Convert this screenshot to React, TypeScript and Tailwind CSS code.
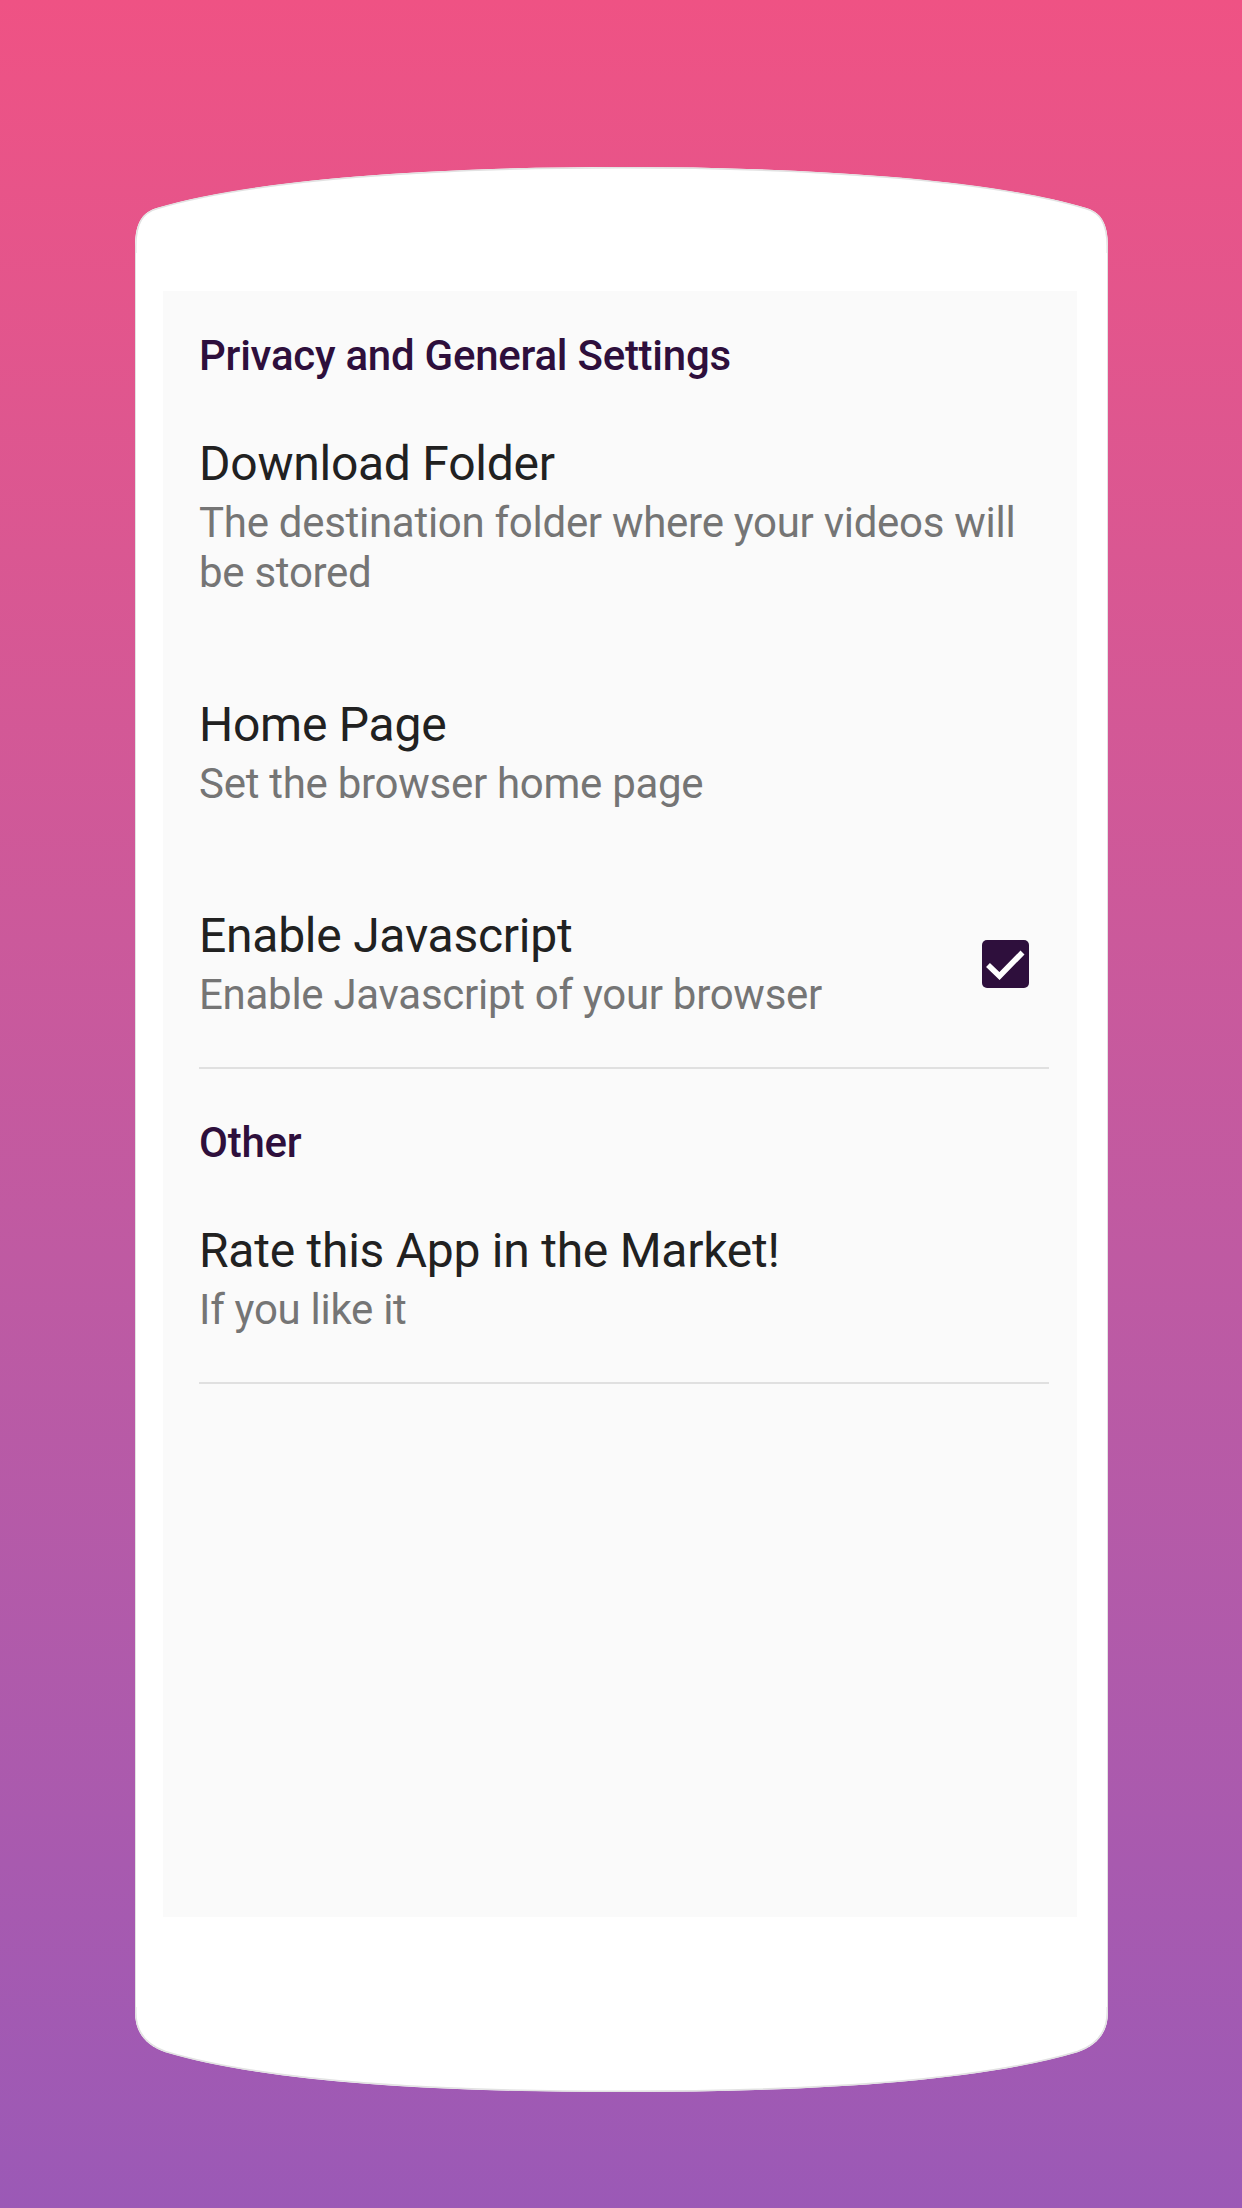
import React from "react";

function TopCap() {
  return (
    <svg width="973" height="86" viewBox="0 0 973 86" className="block">
      <path
        d="M0,86 L0,80 C0,55 8,45 22,41 C120,12 300,0 486.5,0 C673,0 853,12 951,41 C965,45 973,55 973,80 L973,86 Z"
        fill="#ffffff"
      />
      <path
        d="M0.75,86 L0.75,80 C0.75,55 8.5,45.5 22.5,41.5 C120,12.6 300,0.75 486.5,0.75 C673,0.75 853,12.6 950.5,41.5 C964.5,45.5 972.25,55 972.25,80 L972.25,86"
        fill="none"
        stroke="#e2e2e2"
        strokeWidth="1.5"
      />
    </svg>
  );
}

function BottomCap() {
  return (
    <svg width="973" height="86" viewBox="0 0 973 86" className="block">
      <path
        d="M0,0 L0,5 C0,25 10,38 30,45 C130,75 300,85 486.5,85 C673,85 843,75 943,45 C963,38 973,25 973,5 L973,0 Z"
        fill="#ffffff"
      />
      <path
        d="M0.75,0 L0.75,5 C0.75,25 10.5,37.5 30.5,44.5 C130,74.3 300,84.25 486.5,84.25 C673,84.25 843,74.3 942.5,44.5 C962.5,37.5 972.25,25 972.25,5 L972.25,0"
        fill="none"
        stroke="#e2e2e2"
        strokeWidth="1.5"
      />
    </svg>
  );
}

function Header({ children, first }: { children: React.ReactNode; first?: boolean }) {
  return (
    <div
      className={`${first ? "pt-[40px]" : "pt-[49px]"} pb-[3px] text-[42px] leading-[50px] font-medium tracking-[-0.25px] text-[#2e0f3c]`}
    >
      {children}
    </div>
  );
}

function Item({
  title,
  summary,
  checked,
}: {
  title: string;
  summary: string;
  checked?: boolean;
}) {
  return (
    <div className="flex items-center pt-[52px] pb-[47px]">
      <div className="flex-1 min-w-0 pr-[2px]">
        <div className="text-[48px] leading-[56px] tracking-[-0.25px] text-[#212121]">{title}</div>
        <div className="mt-[6px] text-[42px] leading-[50px] tracking-[-0.28px] text-[#757575]">
          {summary}
        </div>
      </div>
      {checked && (
        <div className="ml-[20px] mr-[20px] flex h-[48px] w-[47px] items-center justify-center rounded-[5px] bg-[#2e0f3c]">
          <svg width="47" height="48" viewBox="0 0 47 48">
            <path
              d="M6 25 L17.5 36 L40.5 12.5"
              fill="none"
              stroke="#ffffff"
              strokeWidth="5.6"
              strokeLinecap="butt"
              strokeLinejoin="miter"
            />
          </svg>
        </div>
      )}
    </div>
  );
}

export default function App() {
  return (
    <div
      className="flex h-[2208px] w-[1242px] flex-col items-center bg-gradient-to-b from-[#ef5284] to-[#9b59b6] pt-[167px]"
      style={{ fontFamily: "Roboto, 'Noto Sans', 'Liberation Sans', sans-serif" }}
    >
      <div className="flex w-[973px] flex-col">
        <TopCap />
        <div className="border-x-[1.5px] border-[#e2e2e2] bg-white pl-[27.5px] pr-[29.5px] pt-[38px] pb-[90px]">
          <div className="h-[1626px] bg-[#fafafa] pl-[36px] pr-[28px]">
            <Header first>Privacy and General Settings</Header>
            <Item
              title="Download Folder"
              summary="The destination folder where your videos will be stored"
            />
            <Item title="Home Page" summary="Set the browser home page" />
            <Item
              title="Enable Javascript"
              summary="Enable Javascript of your browser"
              checked
            />
            <div className="h-[2px] bg-[#e0e0e0]" />
            <Header>Other</Header>
            <Item title="Rate this App in the Market!" summary="If you like it" />
            <div className="h-[2px] bg-[#e0e0e0]" />
          </div>
        </div>
        <BottomCap />
      </div>
    </div>
  );
}
